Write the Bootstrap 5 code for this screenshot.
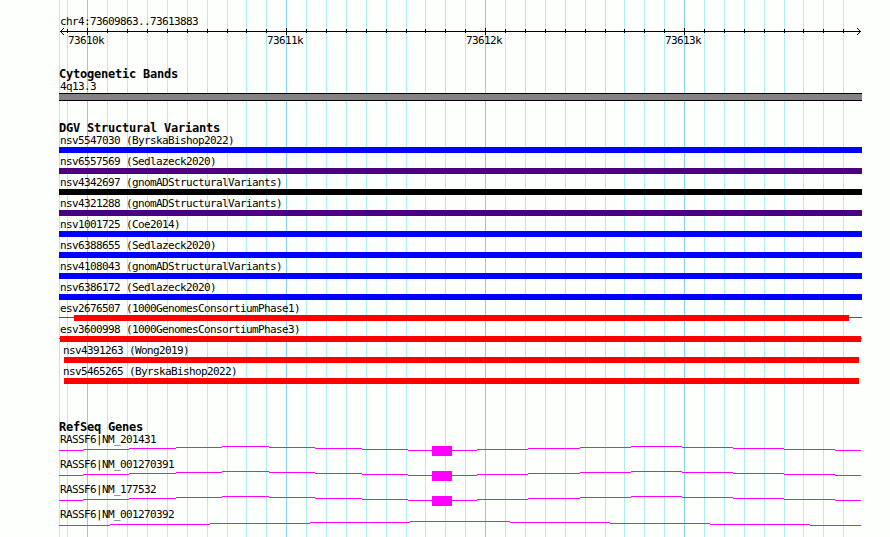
<!DOCTYPE html>
<html lang="en">
<head>
<meta charset="utf-8">
<title>chr4:73609863..73613883</title>
<link href="https://cdn.jsdelivr.net/npm/bootstrap@5.3.0/dist/css/bootstrap.min.css" rel="stylesheet">
<style>
body { background: #fdfffc; color: #000; font: 11px/13px "DejaVu Sans Mono", monospace; letter-spacing: -.622px; }
.browser { width: 890px; height: 537px; padding-left: 59px; }
.panel { width: 803px; }
svg { display: block; shape-rendering: crispEdges; overflow: visible; }
.guides { left: 0; top: 0; z-index: 0; }
.ruler { padding-top: 15px; height: 67px; }
.ruler svg { margin-top: -1px; }
.ticks { margin-top: -1px; display: grid; grid-template-columns: 199px 199px 199px auto; padding-left: 9px; }
h2 { font-size: 12px; font-weight: 700; line-height: 13px; height: 13px; padding-top: 1px; margin: 0; letter-spacing: -.224px; white-space: pre; }
.lbl { height: 13px; padding-left: 1px; white-space: pre; }
.band { height: 8px; background: #848284; border: solid #000; border-width: 1px 0; }
.sv { height: 21px; }
.bar { height: 6px; }
.blue { background: #00f; } .indigo { background: #4b0082; } .red { background: #f00; }
.thin { background: linear-gradient(#dc143c, #dc143c) 0 2px / 100% 1px no-repeat; }
.gene { height: 25px; }
</style>
<script src="https://cdn.jsdelivr.net/npm/bootstrap@5.3.0/dist/js/bootstrap.bundle.min.js"></script>
</head>
<body>
<main class="browser position-relative overflow-hidden">
<svg class="guides position-absolute" width="890" height="537" fill="none">
<path stroke="#afeeee" d="M59.5 0v537M67.5 0v537M107.5 0v537M127.5 0v537M147.5 0v537M167.5 0v537M187.5 0v537M207.5 0v537M227.5 0v537M246.5 0v537M266.5 0v537M306.5 0v537M326.5 0v537M346.5 0v537M366.5 0v537M386.5 0v537M406.5 0v537M425.5 0v537M445.5 0v537M465.5 0v537M505.5 0v537M525.5 0v537M545.5 0v537M565.5 0v537M585.5 0v537M605.5 0v537M624.5 0v537M644.5 0v537M664.5 0v537M704.5 0v537M724.5 0v537M744.5 0v537M764.5 0v537M784.5 0v537M803.5 0v537M823.5 0v537M843.5 0v537"/>
<path stroke="#87ceeb" d="M87.5 0v537M286.5 0v537M485.5 0v537M684.5 0v537"/>
</svg>
<div class="panel position-relative">
<section class="ruler">
<div class="lbl">chr4:73609863..73613883</div>
<svg width="803" height="8" viewBox="59 27 803 8" fill="none" stroke="#000">
<path d="M60 31.5H861M87.5 28v7M286.5 28v7M485.5 28v7M684.5 28v7"/>
<path d="M67.5 29v4M107.5 29v4M127.5 29v4M147.5 29v4M167.5 29v4M187.5 29v4M207.5 29v4M227.5 29v4M246.5 29v4M266.5 29v4M306.5 29v4M326.5 29v4M346.5 29v4M366.5 29v4M386.5 29v4M406.5 29v4M425.5 29v4M445.5 29v4M465.5 29v4M505.5 29v4M525.5 29v4M545.5 29v4M565.5 29v4M585.5 29v4M605.5 29v4M624.5 29v4M644.5 29v4M664.5 29v4M704.5 29v4M724.5 29v4M744.5 29v4M764.5 29v4M784.5 29v4M803.5 29v4M823.5 29v4M843.5 29v4"/>
<path d="M61 30.5h1M62 29.5h1M63 28.5h1M61 32.5h1M62 33.5h1M63 34.5h1M859 30.5h1M858 29.5h1M857 28.5h1M859 32.5h1M858 33.5h1M857 34.5h1"/>
</svg>
<div class="ticks"><span>73610k</span><span>73611k</span><span>73612k</span><span>73613k</span></div>
</section>
<section style="height:54px">
<h2>Cytogenetic Bands</h2>
<div class="lbl">4q13.3</div>
<div class="band"></div>
</section>
<section style="height:299px">
<h2>DGV Structural Variants</h2>
<div class="sv"><div class="lbl">nsv5547030 (ByrskaBishop2022)</div><div class="bar blue"></div></div>
<div class="sv"><div class="lbl">nsv6557569 (Sedlazeck2020)</div><div class="bar indigo"></div></div>
<div class="sv"><div class="lbl">nsv4342697 (gnomADStructuralVariants)</div><div class="bar bg-black"></div></div>
<div class="sv"><div class="lbl">nsv4321288 (gnomADStructuralVariants)</div><div class="bar indigo"></div></div>
<div class="sv"><div class="lbl">nsv1001725 (Coe2014)</div><div class="bar blue"></div></div>
<div class="sv"><div class="lbl">nsv6388655 (Sedlazeck2020)</div><div class="bar blue"></div></div>
<div class="sv"><div class="lbl">nsv4108043 (gnomADStructuralVariants)</div><div class="bar blue"></div></div>
<div class="sv"><div class="lbl">nsv6386172 (Sedlazeck2020)</div><div class="bar blue"></div></div>
<div class="sv"><div class="lbl">esv2676507 (1000GenomesConsortiumPhase1)</div><div class="thin"><div class="bar red" style="margin:0 13px 0 15px"></div></div></div>
<div class="sv"><div class="lbl">esv3600998 (1000GenomesConsortiumPhase3)</div><div class="thin"><div class="bar red" style="margin:0 1px"></div></div></div>
<div class="sv"><div class="lbl" style="margin-left:3px">nsv4391263 (Wong2019)</div><div class="bar red" style="margin:0 3px 0 5px"></div></div>
<div class="sv"><div class="lbl" style="margin-left:3px">nsv5465265 (ByrskaBishop2022)</div><div class="bar red" style="margin:0 3px 0 5px"></div></div>
</section>
<section>
<h2>RefSeq Genes</h2>
<div class="gene"><div class="lbl">RASSF6|NM_201431</div>
<svg width="803" height="10" viewBox="59 446 803 10"><g id="transcript"><path fill="none" stroke="#f0f" d="M59 450.5H83M83 449.5H129M129 448.5H176M176 447.5H222M222 446.5H269M269 447.5H315M315 448.5H362M362 449.5H408M408 450.5H477M477 449.5H528M528 448.5H580M580 447.5H631M631 446.5H682M682 447.5H733M733 448.5H784M784 449.5H835M835 450.5H861"/><path fill="#f0f" d="M432 446h20v10h-20z"/></g></svg></div>
<div class="gene"><div class="lbl">RASSF6|NM_001270391</div><svg width="803" height="10" viewBox="59 446 803 10"><use href="#transcript"/></svg></div>
<div class="gene"><div class="lbl">RASSF6|NM_177532</div><svg width="803" height="10" viewBox="59 446 803 10"><use href="#transcript"/></svg></div>
<div class="gene"><div class="lbl">RASSF6|NM_001270392</div><svg width="803" height="10" viewBox="59 521 803 10" fill="none" stroke="#f0f"><path d="M59 525.5H110M110 524.5H210M210 523.5H310M310 522.5H410M410 521.5H510M510 522.5H610M610 523.5H710M710 524.5H810M810 525.5H861"/></svg></div>
</section>
</div>
</main>
</body>
</html>
